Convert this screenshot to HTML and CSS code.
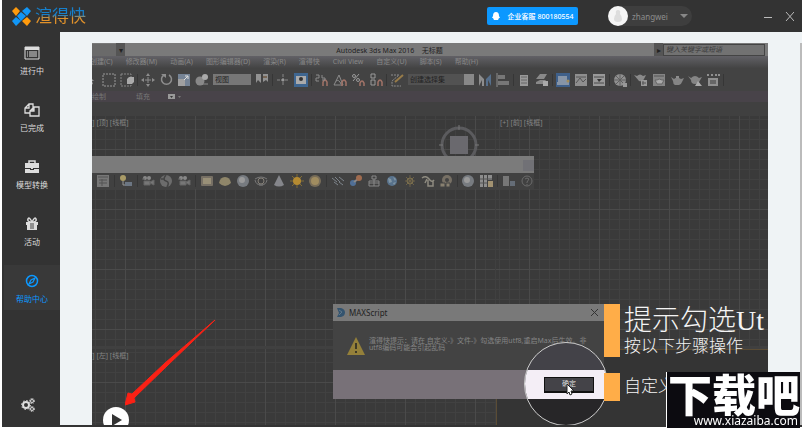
FILE: index.html
```html
<!doctype html>
<html lang="zh-CN">
<head>
    <meta charset="UTF-8">
    <meta name="viewport" content="width=device-width, initial-scale=1.0">
    <title>渲得快</title>
    <link rel="stylesheet" href="styles.css">
</head>
<body>
    <svg class="defs" aria-hidden="true">
        <symbol id="i-cursor" viewBox="0 0 14 14"><path d="M4 2v9l2-2 1 3 2-1-1-3h2z" fill="#999"/></symbol>
        <symbol id="i-rect" viewBox="0 0 14 14"><path d="M1 1h12v12H1z" fill="none" stroke="#999" stroke-dasharray="2 1"/></symbol>
        <symbol id="i-window" viewBox="0 0 14 14"><path d="M1 1h10v12H1z" fill="none" stroke="#888" stroke-dasharray="2 1"/><path d="M7 6l2-2h5v5l-2 2H7z" fill="#aaa"/></symbol>
        <symbol id="i-move" viewBox="0 0 14 14"><path d="M7 0l2 3H5zM7 14l2-3H5zM0 7l3-2v4zM14 7l-3-2v4z" fill="#8d8d8d"/><path d="M7 4v6M4 7h6" stroke="#8d8d8d"/></symbol>
        <symbol id="i-rotate" viewBox="0 0 14 14"><path d="M5 2a5 5 0 1 0 5 0" fill="none" stroke="#8d8d8d" stroke-width="1.5"/><path d="M2 1h5v4z" fill="#8d8d8d"/></symbol>
        <symbol id="i-scale" viewBox="0 0 14 14"><path d="M1 1h12v12H1z" fill="#758395"/><path d="M1 6h7v7H1z" fill="#a0a0a0"/><path d="M7 7l4-4M8 3h3v3" fill="none" stroke="#ddd"/></symbol>
        <symbol id="i-balls" viewBox="0 0 14 14"><circle cx="5" cy="8" r="4.500" fill="#888"/><circle cx="10" cy="4" r="3" fill="#aaa"/><path d="M7 11h6" stroke="#8d8d8d"/></symbol>
        <symbol id="i-pivot" viewBox="0 0 14 14"><path d="M1 1h5v9L3 7l-2 3zM8 1h5v8l-2-2-3 2z" fill="#929292"/><path d="M8 3h4v2H8z" fill="#765"/></symbol>
        <symbol id="i-cross" viewBox="0 0 14 14"><path d="M7 1v12M1 7h12" stroke="#888" stroke-dasharray="3 1"/><circle cx="7" cy="7" r="1.500" fill="#999"/></symbol>
        <symbol id="i-key" viewBox="0 0 14 14"><path d="M0 0h14v14H0z" fill="#3f6690"/><path d="M2 3h10v8H2z" fill="#aaa"/><circle cx="7" cy="6" r="2" fill="#333"/></symbol>
        <symbol id="i-snap" viewBox="0 0 14 14"><path d="M8 13V9q2-4 4 0v4" fill="none" stroke="#a27468" stroke-width="1.500"/><path d="M1 2h3v3H1v3h3M7 2v3h3v2H7" fill="none" stroke="#8c8c8c"/></symbol>
        <symbol id="i-angle" viewBox="0 0 14 14"><path d="M1 12L6 2l4 10zM3 8q3-2 5 3" fill="none" stroke="#8c8c8c"/><path d="M9 13V9q2-4 4 0v4" fill="none" stroke="#a27468" stroke-width="1.500"/></symbol>
        <symbol id="i-percent" viewBox="0 0 14 14"><path d="M2 8l6-7" stroke="#999"/><circle cx="3" cy="3" r="1.500" fill="none" stroke="#999"/><circle cx="7" cy="7" r="1.500" fill="none" stroke="#999"/><path d="M9 13v-3q2-4 4 0v3" fill="none" stroke="#a27468" stroke-width="1.500"/></symbol>
        <symbol id="i-spinner" viewBox="0 0 14 14"><path d="M2 1h4v4H2zM2 7h4v5H2z" fill="none" stroke="#9a9a9a"/><path d="M9 13V9q2-4 4 0v4" fill="none" stroke="#a27468" stroke-width="1.500"/></symbol>
        <symbol id="i-edit" viewBox="0 0 14 14"><path d="M1 2h8L2 8v5h9" fill="none" stroke="#8d8d8d" stroke-dasharray="2 1"/><path d="M5 9l8-7" stroke="#987c49" stroke-width="2"/></symbol>
        <symbol id="i-mirror" viewBox="0 0 14 14"><path d="M1 1l5 5v7H4V7L1 13z" fill="#8d8d8d"/><path d="M13 1L8 6v7h2V7l3 6z" fill="#566f8b"/></symbol>
        <symbol id="i-align" viewBox="0 0 14 14"><path d="M1 0v14" stroke="#8d8d8d"/><path d="M2 2h7v4H2zM2 8h11v4H2z" fill="#777"/></symbol>
        <symbol id="i-layer" viewBox="0 0 14 14"><path d="M3 2h8v11H3z" fill="#999"/><path d="M4 4h6M4 7h6M4 10h6" stroke="#666"/></symbol>
        <symbol id="i-stack" viewBox="0 0 14 14"><path d="M1 6l4-5h7L9 6zM1 9l4-2h6l-3 4H1z" fill="#898989"/><path d="M8 8h5v5H8z" fill="#aaa"/></symbol>
        <symbol id="i-ribbon" viewBox="0 0 14 14"><path d="M0 0h14v14H0z" fill="#3f608a"/><path d="M2 3h9v6H2zM1 9h12v3H1z" fill="#8795a7"/><circle cx="12" cy="8" r="1.500" fill="#a28c5a"/></symbol>
        <symbol id="i-curve" viewBox="0 0 14 14"><path d="M1 1h12v12H1z" fill="#8f8f8f"/><path d="M2 10l4-5 3 4 3-3M2 4h10" fill="none" stroke="#555"/></symbol>
        <symbol id="i-schematic" viewBox="0 0 14 14"><path d="M1 1h12v12H1z" fill="#999"/><path d="M2 4h10M2 10h10" stroke="#4b4b4b"/><path d="M5 6h5L7 9z" fill="#333"/></symbol>
        <symbol id="i-material" viewBox="0 0 14 14"><circle cx="7" cy="7" r="6" fill="#909090"/><path d="M3 3l8 8M11 3l-8 8M1 7h12M7 1v12" stroke="#606060"/><path d="M10 10h4v4h-4z" fill="#999"/></symbol>
        <symbol id="i-teapot" viewBox="0 0 14 14"><path d="M1 4l3 2q3-3 7 0l3-1-2 4q-1 3-3 3H5Q3 11 3 8z" fill="#858585"/><path d="M6 3h3v2H6z" fill="#8d8d8d"/></symbol>
        <symbol id="i-setup" viewBox="0 0 14 14"><path d="M0 2l3 1q3-3 6 0l3-1-2 4q-1 3-5 2z" fill="#8a8a8a"/><path d="M7 7h6v6H7z" fill="#999"/><path d="M9 8v4M8 10h4" stroke="#555"/></symbol>
        <symbol id="i-sky" viewBox="0 0 14 14"><path d="M0 3l3 2q4-4 8 0l3-1-3 5q-1 2-4 2-4 0-4-4z" fill="#858585"/><path d="M7 13l3-5 4 5z" fill="#aaa"/></symbol>
        <symbol id="i-frame" viewBox="0 0 14 14"><path d="M1 1h12v12H1z" fill="#858585"/><path d="M2 3h10" stroke="#555"/><path d="M3 7h2q2-2 5 0h2l-2 4H5z" fill="#aaa" stroke="#666"/></symbol>
        <symbol id="i-film" viewBox="0 0 14 14"><path d="M1 1h2v2H1zM5 1h2v2H5zM9 1h2v2H9zM12 1h2v2h-2zM2 5h10v8H2z" fill="#909090"/><path d="M4 7h6v4H4z" fill="#666"/></symbol>
        <symbol id="i-panel" viewBox="0 0 14 14"><path d="M1 1h12v12H1z" fill="#777"/><path d="M2 3h10M3 6h8M3 9h8M6 5v7" stroke="#555"/></symbol>
        <symbol id="i-lamp" viewBox="0 0 14 14"><circle cx="4" cy="4" r="3" fill="#a99b67"/><path d="M4 7v4h2" fill="none" stroke="#999"/><path d="M6 8h7v4H6z" fill="#6c7683"/></symbol>
        <symbol id="i-camera" viewBox="0 0 14 14"><circle cx="4" cy="4" r="2" fill="#888"/><circle cx="8" cy="4" r="2" fill="#888"/><path d="M3 7h6v4H3zM9 8l4-2v5l-4-2zM1 5h3" fill="#777" stroke="#666"/></symbol>
        <symbol id="i-swirl" viewBox="0 0 14 14"><circle cx="7" cy="7" r="6" fill="#6c6c6c"/><path d="M7 1q-4 5 0 6t1 6M2 5h4" fill="none" stroke="#444" stroke-width="1.500"/></symbol>
        <symbol id="i-box" viewBox="0 0 14 14"><rect x="1" y="2" width="12" height="10" rx="1" fill="#777065"/><path d="M3 4h8v6H3z" fill="#999078"/></symbol>
        <symbol id="i-dome" viewBox="0 0 14 14"><path d="M1 9q1-6 6-6t6 6q-6 6-12 0" fill="#8f866a"/></symbol>
        <symbol id="i-sphere" viewBox="0 0 14 14"><circle cx="7" cy="7" r="6" fill="#777b80"/><circle cx="6" cy="6" r="3" fill="#9a9a9a"/></symbol>
        <symbol id="i-pot" viewBox="0 0 14 14"><circle cx="7" cy="7" r="3" fill="none" stroke="#858078"/><path d="M1 5q6-4 12 0M1 6q1 5 6 5t6-5M5 11h4" fill="none" stroke="#777"/></symbol>
        <symbol id="i-cone" viewBox="0 0 14 14"><path d="M7 1l5 10q-5 3-10 0z" fill="#85868b"/></symbol>
        <symbol id="i-sun" viewBox="0 0 14 14"><path d="M7 0v14M0 7h14M2 2l10 10M12 2L2 12" stroke="#806c36"/><circle cx="7" cy="7" r="4" fill="#b58b32"/></symbol>
        <symbol id="i-disc" viewBox="0 0 14 14"><circle cx="7" cy="7" r="6" fill="#786d59"/><circle cx="7" cy="7" r="4" fill="#a08c60"/></symbol>
        <symbol id="i-hair" viewBox="0 0 14 14"><path d="M1 4l5 4M4 3l5 5M8 3l5 4M3 8l4 3M8 8l4 3" stroke="#7e858c"/></symbol>
        <symbol id="i-link" viewBox="0 0 14 14"><circle cx="4" cy="9" r="3" fill="#506f96"/><path d="M5 8l4-3" stroke="#888" stroke-width="2"/><circle cx="10" cy="4" r="3" fill="#a16c4f"/></symbol>
        <symbol id="i-grid" viewBox="0 0 14 14"><path d="M5 2h4v3H5zM2 7h10v5H2zM7 5v7M2 9h10" fill="none" stroke="#888"/></symbol>
        <symbol id="i-globe" viewBox="0 0 14 14"><circle cx="7" cy="7" r="5" fill="#58728c"/><path d="M3 4l3 1 1 3-3 1zM8 3l3 2-1 2zM8 9l3-1-2 3z" fill="#8296a4"/></symbol>
        <symbol id="i-burst" viewBox="0 0 14 14"><path d="M7 1v12M2 7h10M3 3l8 8M11 3l-8 8" stroke="#6c6148"/><circle cx="7" cy="7" r="3" fill="none" stroke="#7c704e"/></symbol>
        <symbol id="i-tree" viewBox="0 0 14 14"><path d="M1 4q4-3 7 1t5 1M6 5L4 9M7 6v6h5V7" fill="none" stroke="#8e8b80" stroke-width="1.500"/></symbol>
        <symbol id="i-reel" viewBox="0 0 14 14"><circle cx="8" cy="6" r="5" fill="#777065"/><circle cx="8" cy="6" r="2" fill="#444"/><path d="M1 9h5v4H1zM7 9h4v4H7z" fill="#888070" stroke="#444"/></symbol>
        <symbol id="i-bars" viewBox="0 0 14 14"><path d="M1 1h3v12H1zM5 1h3v12H5zM9 1h4v5H9z" fill="#8d8d8d"/><path d="M9 7h5v6H9z" fill="#a29271"/><path d="M1 5h12M1 9h7" stroke="#555"/></symbol>
        <symbol id="i-devices" viewBox="0 0 14 14"><path d="M1 2h6v10H1z" fill="#777"/><path d="M8 7h5v5H8z" fill="#656d77"/></symbol>
        <symbol id="i-help" viewBox="0 0 14 14"><circle cx="7" cy="7" r="5" fill="none" stroke="#6b6b6b"/><path d="M5 5q2-2 4 0L7 8v1M7 10v1" fill="none" stroke="#6b6b6b"/></symbol>
    </svg>

    <header class="header">
        <svg class="logo" viewBox="0 0 19 19">
            <path d="M4 0l4 4-4 5-4-5zM15 10l4 4-4 5-5-5z" fill="#ff9a0c"/>
            <path d="M15 0l4 4-4 5-5-5zM9 5l5 4-5 5-4-5zM4 10l5 4-5 5-4-5z" fill="#1296f5"/>
        </svg>
        <h1 class="brand">渲得快</h1>
        <button class="service" type="button">
            <svg class="qq" viewBox="0 0 8 8"><path d="M4 0q3 0 3 4l1 2H7l-1 2H2L1 6H0l1-2q0-4 3-4z" fill="#fff"/></svg>
            企业客服 800180554
        </button>
        <button class="user" type="button">
            <span class="avatar"><svg viewBox="0 0 8 12"><path d="M4 0q3 0 2 4 2 2 2 5 0 3-4 3t-4-3q0-3 2-5-1-4 2-4z" fill="#ddd"/></svg></span>
            <span class="name">zhangwei</span>
            <svg class="caret" viewBox="0 0 8 4"><path d="M0 0h8L4 4z" fill="#888"/></svg>
        </button>
        <button class="win" type="button" aria-label="最小化"><svg viewBox="0 0 9 9"><path d="M0 5.500h8" stroke="#bbb"/></svg></button>
        <button class="win" type="button" aria-label="关闭"><svg viewBox="0 0 9 9"><path d="M1 0l8 9M9 0L1 9" stroke="#bbb"/></svg></button>
    </header>

    <div class="page">
        <nav class="side">
            <a class="item" href="#">
                <svg viewBox="0 0 16 14"><path d="M1 1h14v12H1z" fill="none" stroke="#ddd"/><path d="M1 1h14v3H1z" fill="#ddd"/><path d="M3 6h1M5 6h8M3 8h1M5 8h8M3 10h1M5 10h8" stroke="#ddd"/></svg>
                进行中
            </a>
            <a class="item" href="#">
                <svg viewBox="0 0 16 14"><path d="M5 1h4v7H6v2H1V5zM5 1v4H1M10 4h5v9H6V8zM10 4v4H6" fill="none" stroke="#ddd" stroke-width="1.300"/></svg>
                已完成
            </a>
            <a class="item" href="#">
                <svg viewBox="0 0 16 14"><path d="M5 3V1h6v2" fill="none" stroke="#ddd" stroke-width="1.500"/><path d="M1 3h14v5H1zM1 9h5v1h4V9h5v4H1zM7 8h2v1H7z" fill="#ddd"/></svg>
                模型转换
            </a>
            <a class="item" href="#">
                <svg viewBox="0 0 16 14"><path d="M8 5Q3 5 4 2t4 3q3-6 4-3t-4 3z" fill="none" stroke="#ddd" stroke-width="1.500"/><path d="M2 5h12v3H2zM3 8h10v5H3z" fill="#ddd"/><path d="M7 6v6M9 6v6" stroke="#444"/></svg>
                活动
            </a>
            <a class="item active" href="#">
                <svg viewBox="0 0 16 14"><circle cx="8" cy="7" r="5.500" fill="none" stroke="#0c98ff" stroke-width="1.500"/><path d="M11 4L9 8l-4 2 2-4z" fill="none" stroke="#0c98ff" stroke-width="1.200"/></svg>
                帮助中心
            </a>
            <a class="settings" href="#" aria-label="设置">
                <svg viewBox="0 0 14 14"><circle cx="5" cy="7" r="3" fill="none" stroke="#ddd" stroke-width="2"/><circle cx="5" cy="7" r="4.500" fill="none" stroke="#ddd" stroke-dasharray="1.500 2"/><circle cx="11" cy="3" r="1.500" fill="none" stroke="#ddd"/><circle cx="11" cy="3" r="2.500" fill="none" stroke="#ddd" stroke-dasharray="1 1"/><circle cx="11" cy="11" r="1.500" fill="none" stroke="#ddd"/><circle cx="11" cy="11" r="2.500" fill="none" stroke="#ddd" stroke-dasharray="1 1"/></svg>
            </a>
        </nav>

        <main class="main">
            <section class="video">
                <div class="titlebar">
                    <span class="quick"></span>
                    <span class="quick-more">▾</span>
                    <span class="title">Autodesk 3ds Max 2016 &nbsp;&nbsp; 无标题</span>
                    <span class="quick-more">▸</span>
                    <input class="search" type="text" aria-label="搜索" placeholder="键入关键字或短语">
                </div>
                <div class="menu">
                    <span>创建(C)</span><span>修改器(M)</span><span>动画(A)</span><span>图形编辑器(D)</span><span>渲染(R)</span><span>渲得快</span><span>Civil View</span><span>自定义(U)</span><span>脚本(S)</span><span>帮助(H)</span>
                </div>
                <div class="tools">
                    <svg><use href="#i-cursor"/></svg>
                    <svg><use href="#i-rect"/></svg>
                    <svg><use href="#i-window"/></svg>
                    <i class="sep"></i>
                    <svg><use href="#i-move"/></svg>
                    <svg><use href="#i-rotate"/></svg>
                    <svg><use href="#i-scale"/></svg>
                    <svg><use href="#i-balls"/></svg>
                    <select class="view" aria-label="坐标系"><option>视图</option></select>
                    <svg><use href="#i-pivot"/></svg>
                    <i class="sep"></i>
                    <svg><use href="#i-cross"/></svg>
                    <svg><use href="#i-key"/></svg>
                    <i class="sep"></i>
                    <svg><use href="#i-snap"/></svg>
                    <svg><use href="#i-angle"/></svg>
                    <svg><use href="#i-percent"/></svg>
                    <svg><use href="#i-spinner"/></svg>
                    <i class="sep"></i>
                    <svg><use href="#i-edit"/></svg>
                    <select class="sets" aria-label="选择集"><option>创建选择集</option></select>
                    <svg><use href="#i-mirror"/></svg>
                    <svg><use href="#i-align"/></svg>
                    <i class="sep"></i>
                    <svg><use href="#i-layer"/></svg>
                    <svg><use href="#i-stack"/></svg>
                    <i class="sep"></i>
                    <svg><use href="#i-ribbon"/></svg>
                    <svg><use href="#i-curve"/></svg>
                    <svg><use href="#i-schematic"/></svg>
                    <i class="sep"></i>
                    <svg><use href="#i-material"/></svg>
                    <i class="sep"></i>
                    <svg><use href="#i-setup"/></svg>
                    <svg><use href="#i-frame"/></svg>
                    <svg><use href="#i-teapot"/></svg>
                    <svg><use href="#i-sky"/></svg>
                    <svg><use href="#i-film"/></svg>
                    <i class="sep"></i>
                </div>
                <div class="ribbon">
                    <span>绘制</span><span>填充</span>
                    <svg viewBox="0 0 14 6"><path d="M0 0h7v5H0z" fill="#999"/><path d="M2 2h3L3.500 4z" fill="#333"/><path d="M10 2h3l-1.500 2z" fill="#777"/></svg>
                </div>
                <div class="canvas">
                    <div class="view-pane"><span>[+] [顶] [线框]</span></div>
                    <div class="view-pane"><span>[+] [前] [线框]</span></div>
                    <div class="view-pane"><span>[+] [左] [线框]</span></div>
                    <div class="view-pane persp"></div>
                </div>

                <svg class="cube" viewBox="0 0 40 40"><circle cx="20" cy="20" r="17" fill="none" stroke="#5b5b5e" stroke-width="3"/><path d="M11 11h18v18H11z" fill="#6a696e"/><path d="M20 0v5M0 20h4M36 20h4" stroke="#777"/></svg>

                <div class="float">
                    <div class="float-bar"><span class="float-close"></span></div>
                    <div class="float-tools">
                        <svg><use href="#i-panel"/></svg>
                        <i class="sep"></i>
                        <svg><use href="#i-lamp"/></svg>
                        <i class="sep"></i>
                        <svg><use href="#i-camera"/></svg>
                        <svg><use href="#i-swirl"/></svg>
                        <svg><use href="#i-camera"/></svg>
                        <i class="sep"></i>
                        <svg><use href="#i-box"/></svg>
                        <svg><use href="#i-dome"/></svg>
                        <svg><use href="#i-sphere"/></svg>
                        <svg><use href="#i-pot"/></svg>
                        <svg><use href="#i-cone"/></svg>
                        <svg><use href="#i-sun"/></svg>
                        <svg><use href="#i-disc"/></svg>
                        <i class="sep"></i>
                        <svg><use href="#i-hair"/></svg>
                        <svg><use href="#i-link"/></svg>
                        <svg><use href="#i-grid"/></svg>
                        <svg><use href="#i-globe"/></svg>
                        <svg><use href="#i-burst"/></svg>
                        <svg><use href="#i-tree"/></svg>
                        <svg><use href="#i-reel"/></svg>
                        <i class="sep"></i>
                        <svg><use href="#i-sphere"/></svg>
                        <svg><use href="#i-bars"/></svg>
                        <i class="sep"></i>
                        <svg><use href="#i-devices"/></svg>
                        <svg><use href="#i-help"/></svg>
                    </div>
                </div>

                <div class="dialog">
                    <div class="dialog-head">
                        <svg class="max" viewBox="0 0 8 9"><path d="M0 0h4q4 1 4 4.500T4 9H0l2-4z" fill="#34546f"/><path d="M2 2l3 2-3 3" fill="none" stroke="#5f7688"/></svg>
                        <span>MAXScript</span>
                        <svg class="x" viewBox="0 0 7 7"><path d="M0 0l7 7M7 0L0 7" stroke="#333"/></svg>
                    </div>
                    <div class="dialog-body">
                        <svg class="warn" viewBox="0 0 18 18"><path d="M9 0l9 18H0z" fill="#94803a"/><path d="M9 6v6M9 14v2" stroke="#222" stroke-width="1.500"/></svg>
                        <p>渲得快提示：请在 自定义-》文件-》勾选使用utf8,重启Max后生效。非utf8编码可能会引起乱码</p>
                    </div>
                    <div class="dialog-foot"></div>
                </div>

                <div class="lens">
                    <div class="lens-foot"><button class="ok" type="button">确定</button></div>
                </div>
                <svg class="pointer" viewBox="0 0 8 12"><path d="M1 0v10l2-2 1 3 2-1-1-3h3z" fill="#fff" stroke="#222"/></svg>

                <div class="tip">
                    <p class="tip-big">提示勾选Ut</p>
                    <p>按以下步骤操作</p>
                </div>
                <div class="tip second"><p>自定义</p></div>

                <svg class="arrow" viewBox="0 0 92 88"><path d="M90 1L40 44 7 75l-4-1-3 12 10-3-1-4 34-33z" fill="#fb2115" stroke="#fb2115" stroke-linejoin="round"/></svg>
                <button class="play" type="button" aria-label="播放"><svg viewBox="0 0 26 26"><circle cx="13" cy="13" r="13" fill="#fff"/><path d="M9 7l10 6-10 6z" fill="#333"/></svg></button>
            </section>
            <i class="scroll"></i>
        </main>
    </div>

    <div class="mark">
        <strong>下载吧</strong>
        <span>www.xiazaiba.com</span>
    </div>
</body>
</html>
```

FILE: styles.css
```css
*{
    margin: 0;
    padding: 0;
    box-sizing: border-box;
}
html,body{
    height: 100%;
    overflow: hidden;
}
body{
    display: flex;
    flex-direction: column;
    border-left: 2px solid #fff;
    border-bottom: 1px solid #fff;
    background: #333;
    font-family: "Noto Sans", "Noto Sans CJK SC", sans-serif;
    font-size: 8px;
    color: #ddd;
}
button,input,select{
    border: 0;
    font: inherit;
    color: inherit;
    background: none;
    appearance: none;
}
a{
    color: inherit;
    text-decoration: none;
}
svg{
    display: block;
    flex-shrink: 0;
}
.defs{
    position: absolute;
    width: 0;
    height: 0;
}

/* header */
.header{
    display: flex;
    flex-shrink: 0;
    align-items: center;
    height: 32px;
    padding: 0 8px 0 10px;
}
.logo{
    width: 19px;
    height: 19px;
}
.brand{
    margin-left: 4px;
    font-size: 17px;
    line-height: 20px;
    font-weight: 400;
    background: linear-gradient(#1680cc 45%, #e2922a 60%);
    -webkit-background-clip: text;
    background-clip: text;
    color: transparent;
}
.service{
    display: flex;
    align-items: center;
    justify-content: center;
    gap: 8px;
    width: 91px;
    height: 18px;
    margin-left: auto;
    border-radius: 2px;
    background: #0c98ff;
    color: #fff;
    font-size: 7px;
    font-weight: 500;
    white-space: nowrap;
}
.qq{
    width: 8px;
    height: 8px;
}
.user{
    display: flex;
    align-items: center;
    width: 84px;
    height: 20px;
    margin: 0 72px 0 30px;
    padding-right: 4px;
    border-radius: 10px;
    background: #3e3e3e;
    color: #8d8d8d;
}
.avatar{
    display: flex;
    align-items: center;
    justify-content: center;
    width: 20px;
    height: 20px;
    margin-right: 4px;
    border-radius: 50%;
    background: #f5f5f5;
}
.avatar svg{
    width: 8px;
    height: 12px;
}
.caret{
    width: 8px;
    height: 4px;
    margin-left: auto;
}
.win{
    width: 9px;
    height: 9px;
}
.win + .win{
    margin-left: 12px;
}

/* left menu */
.page{
    display: flex;
    flex: 1;
    min-height: 0;
}
.side{
    display: flex;
    flex-direction: column;
    gap: 12px;
    width: 58px;
    padding: 5px 0 15px 2px;
}
.item{
    display: flex;
    flex-direction: column;
    align-items: center;
    gap: 5px;
    height: 45px;
    padding-top: 9px;
    line-height: 12px;
}
.item svg{
    width: 16px;
    height: 14px;
}
.item.active{
    background: #393939;
    color: #0c98ff;
}
.settings{
    margin: auto auto 0 17px;
}
.settings svg{
    width: 14px;
    height: 14px;
}

/* content */
.main{
    display: flex;
    flex: 1;
    min-width: 0;
    padding: 11px 0 0 32px;
    border-bottom: 2px solid #333;
    background: #eff3f5;
}
.scroll{
    width: 2px;
    margin-left: 32px;
    background: #bbb;
}
.video{
    position: relative;
    display: flex;
    flex: 1;
    flex-direction: column;
    min-width: 0;
    overflow: hidden;
    background: #3a3a3a;
}
.titlebar{
    display: flex;
    align-items: center;
    height: 13px;
    background: #7a7a7a;
    color: #222;
}
.quick{
    width: 24px;
    height: 12px;
    background: #6a6a6a;
}
.quick-more{
    width: 9px;
    background: #555;
    line-height: 13px;
    text-align: center;
}
.title{
    flex: 1;
    text-align: center;
    font-size: 7px;
}
.search{
    width: 102px;
    height: 12px;
    margin-right: 3px;
    padding: 0 2px;
    border: 1px solid #444;
    background: #727272;
    font-size: 7px;
    font-style: italic;
}
.search::placeholder{
    color: #3b3b3b;
}
.menu{
    display: flex;
    gap: 13px;
    height: 12px;
    margin-left: -2px;
    background: linear-gradient(#626166, #444);
    color: #888;
    font-size: 7px;
    line-height: 12px;
    white-space: nowrap;
}
.tools,.float-tools{
    display: flex;
    align-items: center;
    gap: 4px;
    background: #434343;
}
.tools{
    height: 23px;
    margin-left: -8px;
}
.tools svg,.float-tools svg{
    width: 14px;
    height: 14px;
}
.sep{
    width: 1px;
    height: 12px;
    background: #363636;
}
.tools .sep{
    margin: 0 -1px;
}
.view,.sets{
    height: 11px;
    padding: 0 2px;
    color: #222;
    font-size: 7px;
    line-height: 11px;
}
.view{
    width: 38px;
    background: #777;
}
.sets{
    width: 66px;
    background: linear-gradient(90deg, #525252 56px, #888 56px);
}
.ribbon{
    display: flex;
    align-items: center;
    gap: 30px;
    height: 11px;
    background: #484349;
    color: #777;
    font-size: 7px;
    line-height: 11px;
}
.ribbon svg{
    width: 14px;
    height: 6px;
    margin-left: -12px;
}
.canvas{
    display: grid;
    flex: 1;
    grid-template-columns: 403px 1fr;
    grid-template-rows: 230px 1fr;
    gap: 3px 1px;
    padding-top: 14px;
    background: #404040;
}
.view-pane{
    padding-top: 1px;
    background:
        repeating-linear-gradient(90deg, transparent 0 33px, #4a4a4a 33px 34px, transparent 34px 70px),
        repeating-linear-gradient(transparent 0 33px, #4a4a4a 33px 34px, transparent 34px 60px),
        repeating-linear-gradient(90deg, transparent 0 3px, #414141 3px 4px, transparent 4px 10px),
        repeating-linear-gradient(transparent 0 3px, #414141 3px 4px, transparent 4px 10px),
        #3a3a3a;
    color: #858585;
    font-size: 7px;
    line-height: 12px;
}
.view-pane:nth-child(even){
    padding-left: 4px;
}
.view-pane:nth-child(odd) span{
    margin-left: -6px;
}
.view-pane.persp{
    border: solid #5b4c34;
    border-width: 1px 0 0 1px;
    background: #343434;
}

/* windows lying over the viewports */
.cube{
    position: absolute;
    left: 347px;
    top: 82px;
    width: 40px;
    height: 40px;
}
.float{
    position: absolute;
    left: 0;
    top: 113px;
    width: 442px;
}
.float-bar{
    display: flex;
    justify-content: flex-end;
    height: 17px;
    padding: 4px 0 2px;
    background: #7b7b7b;
}
.float-close{
    width: 11px;
    background: #717176;
}
.float-tools{
    height: 16px;
    padding-left: 4px;
    background: #414141;
}
.dialog{
    position: absolute;
    left: 241px;
    top: 261px;
    width: 271px;
}
.dialog-head{
    display: flex;
    align-items: center;
    gap: 4px;
    height: 17px;
    padding: 0 6px 0 4px;
    background: #797979;
    color: #222;
}
.max{
    width: 8px;
    height: 9px;
}
.x{
    width: 7px;
    height: 7px;
    margin-left: auto;
}
.dialog-body{
    display: flex;
    gap: 4px;
    height: 49px;
    padding: 16px 16px 0 14px;
    background: #434343;
    color: #858585;
    font-size: 7px;
    line-height: 7px;
}
.warn{
    width: 18px;
    height: 18px;
}
.dialog-foot{
    height: 29px;
    background: #787178;
}
.lens{
    position: absolute;
    left: 432px;
    top: 299px;
    width: 84px;
    height: 84px;
    padding-top: 27px;
    overflow: hidden;
    border: 1px solid #ccc;
    border-radius: 50%;
    background: linear-gradient(#434248 50%, #272628 50%);
}
.lens-foot{
    display: flex;
    align-items: center;
    height: 29px;
    padding-left: 19px;
    background: #f4eef6;
}
.ok{
    width: 50px;
    height: 16px;
    border: solid #111;
    border-width: 1px 1px 2px;
    background: #444348;
    color: #ddd;
    font-size: 7px;
    line-height: 12px;
}
.pointer{
    position: absolute;
    left: 474px;
    top: 341px;
    width: 8px;
    height: 12px;
}
.tip{
    position: absolute;
    left: 512px;
    top: 261px;
    height: 53px;
    padding-left: 4px;
    border-left: 16px solid #ffad48;
    color: #f4f4f4;
    font-family: "Liberation Serif", "Noto Sans CJK SC", serif;
    font-size: 17px;
    font-weight: 300;
    line-height: 20px;
    white-space: nowrap;
}
.tip-big{
    font-size: 28px;
    line-height: 33px;
}
.tip.second{
    top: 330px;
    height: 28px;
    line-height: 28px;
}
.arrow{
    position: absolute;
    left: 33px;
    top: 276px;
    width: 92px;
    height: 88px;
}
.play{
    position: absolute;
    left: 11px;
    top: 364px;
    width: 26px;
    height: 26px;
}

/* site mark in the corner */
.mark{
    position: fixed;
    right: 2px;
    bottom: 0;
    display: flex;
    flex-direction: column;
    align-items: flex-end;
    width: 134px;
    height: 56px;
    border-left: 1px solid #fff;
    background: #0c0b10;
    color: #fff;
}
.mark strong{
    font-family: "Noto Sans CJK SC", sans-serif;
    font-size: 44px;
    font-weight: 900;
    line-height: 42px;
}
.mark span{
    padding-right: 2px;
    font-size: 12px;
    line-height: 14px;
}
```
